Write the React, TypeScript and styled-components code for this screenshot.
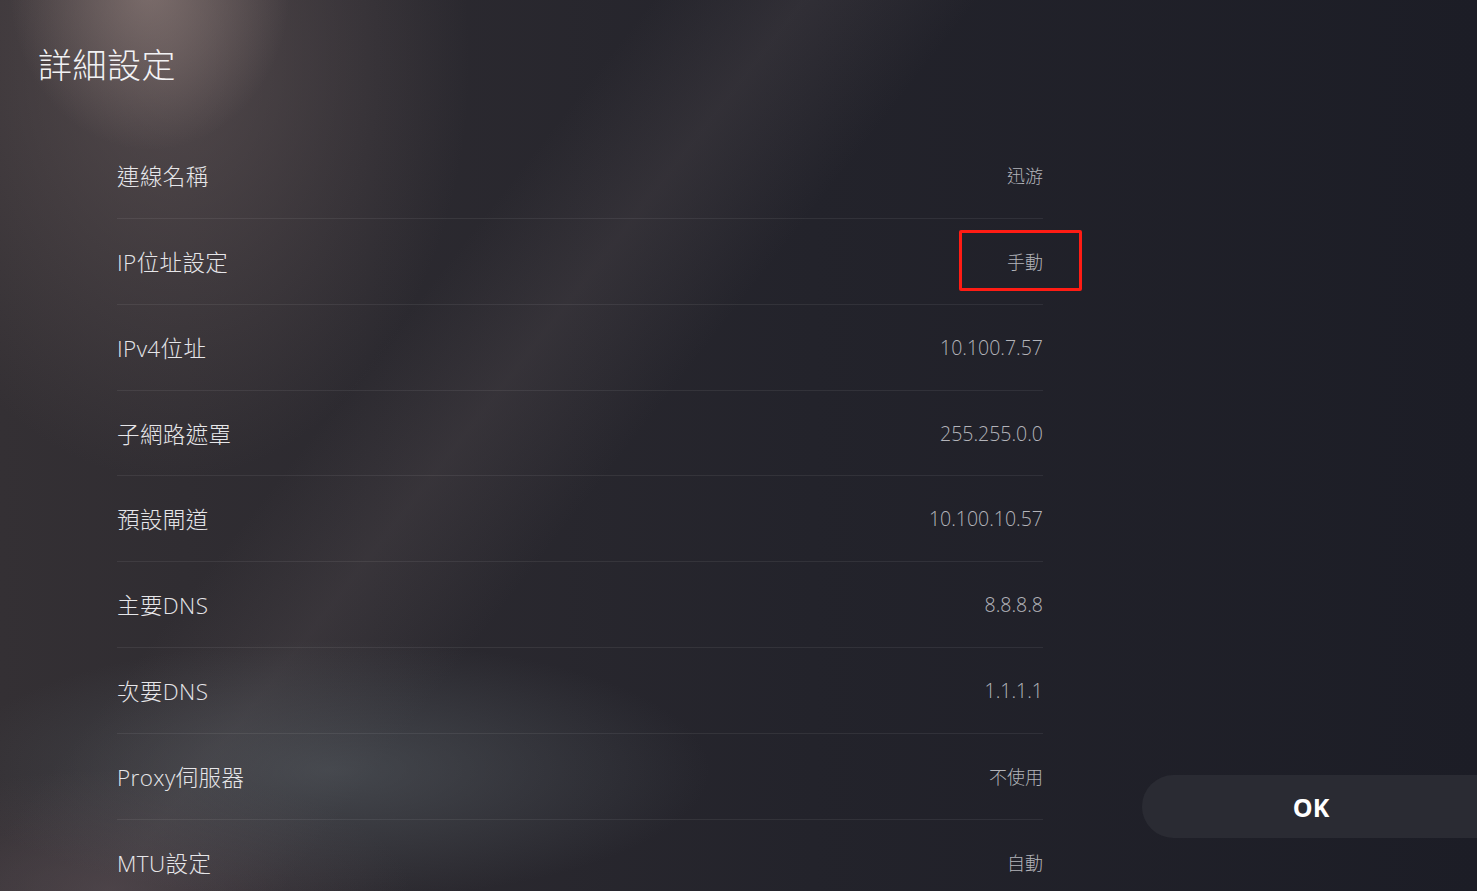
import React from "react";
import styled, { createGlobalStyle } from "styled-components";

const GlobalStyle = createGlobalStyle`
  html, body {
    margin: 0;
    padding: 0;
    background: #1c1d26;
  }
  * {
    box-sizing: border-box;
  }
`;

const Screen = styled.div`
  position: relative;
  width: 1477px;
  height: 891px;
  overflow: hidden;
  font-family: "Open Sans", "Noto Sans CJK TC", sans-serif;
  color: #ececee;
  background:
    radial-gradient(ellipse 140px 160px at 150px -10px, rgba(160, 140, 135, 0.55), rgba(160, 140, 135, 0) 100%),
    radial-gradient(ellipse 300px 420px at 170px 60px, rgba(115, 100, 100, 0.5), rgba(115, 100, 100, 0) 100%),
    radial-gradient(ellipse 380px 130px at 330px 770px, rgba(92, 100, 106, 0.5), rgba(92, 100, 106, 0) 100%),
    radial-gradient(ellipse 300px 120px at 110px 890px, rgba(88, 76, 82, 0.55), rgba(88, 76, 82, 0) 100%),
    linear-gradient(128deg, rgba(0, 0, 0, 0) 30%, rgba(120, 108, 110, 0.16) 37%, rgba(0, 0, 0, 0) 45%),
    linear-gradient(90deg, #343034 0%, #2c2a30 25%, #23232b 55%, #1c1d26 100%);
  display: flex;
  flex-direction: column;
`;

const Title = styled.h1`
  flex-shrink: 0;
  margin: 44px 0 0 38px;
  height: 89px;
  font-family: "Noto Sans CJK TC", sans-serif;
  font-size: 34px;
  font-weight: 300;
  line-height: 40px;
  letter-spacing: 0.5px;
  color: #f2f2f4;
`;

const Body = styled.div`
  display: flex;
  flex: 1;
  min-height: 0;
`;

const List = styled.div`
  margin-left: 117px;
  width: 926px;
  display: flex;
  flex-direction: column;
`;

const Row = styled.div`
  height: 85.86px;
  flex-shrink: 0;
  display: flex;
  align-items: center;
  justify-content: space-between;
  border-bottom: 1.5px solid rgba(255, 255, 255, 0.07);
`;

const Label = styled.span`
  font-size: 22.5px;
  font-weight: 300;
  letter-spacing: 0.4px;
  color: #e6e6e9;
`;

const Value = styled.span<{ $boxed?: boolean; $cjk?: boolean }>`
  position: relative;
  font-size: ${(p) => (p.$cjk ? "18px" : "19.5px")};
  font-weight: 300;
  color: #b3b4ba;
  ${(p) =>
    p.$boxed &&
    `
    &::after {
      content: "";
      position: absolute;
      left: -48px;
      right: -39px;
      top: -18px;
      bottom: -17px;
      border: 3.5px solid #ff1c14;
      border-radius: 2px;
    }
  `}
`;

const Aside = styled.div`
  flex: 1;
  display: flex;
  align-items: flex-end;
  justify-content: flex-end;
  padding-bottom: 53px;
`;

const OkButton = styled.button`
  width: 336px;
  height: 63px;
  margin-right: -1px;
  border: none;
  border-radius: 32px 0 0 32px;
  background: #2a2b33;
  color: #ffffff;
  font-family: "Open Sans", "Noto Sans", sans-serif;
  font-weight: 700;
  font-size: 25px;
  padding-right: 4px;
`;

const rows: { label: string; value: string; boxed?: boolean }[] = [
  { label: "連線名稱", value: "迅游" },
  { label: "IP位址設定", value: "手動", boxed: true },
  { label: "IPv4位址", value: "10.100.7.57" },
  { label: "子網路遮罩", value: "255.255.0.0" },
  { label: "預設閘道", value: "10.100.10.57" },
  { label: "主要DNS", value: "8.8.8.8" },
  { label: "次要DNS", value: "1.1.1.1" },
  { label: "Proxy伺服器", value: "不使用" },
  { label: "MTU設定", value: "自動" },
];

export default function App() {
  return (
    <>
      <GlobalStyle />
      <Screen>
        <Title>詳細設定</Title>
        <Body>
          <List>
            {rows.map((r) => (
              <Row key={r.label}>
                <Label>{r.label}</Label>
                <Value $boxed={r.boxed} $cjk={/[^\x00-\x7F]/.test(r.value)}>
                  {r.value}
                </Value>
              </Row>
            ))}
          </List>
          <Aside>
            <OkButton>OK</OkButton>
          </Aside>
        </Body>
      </Screen>
    </>
  );
}
